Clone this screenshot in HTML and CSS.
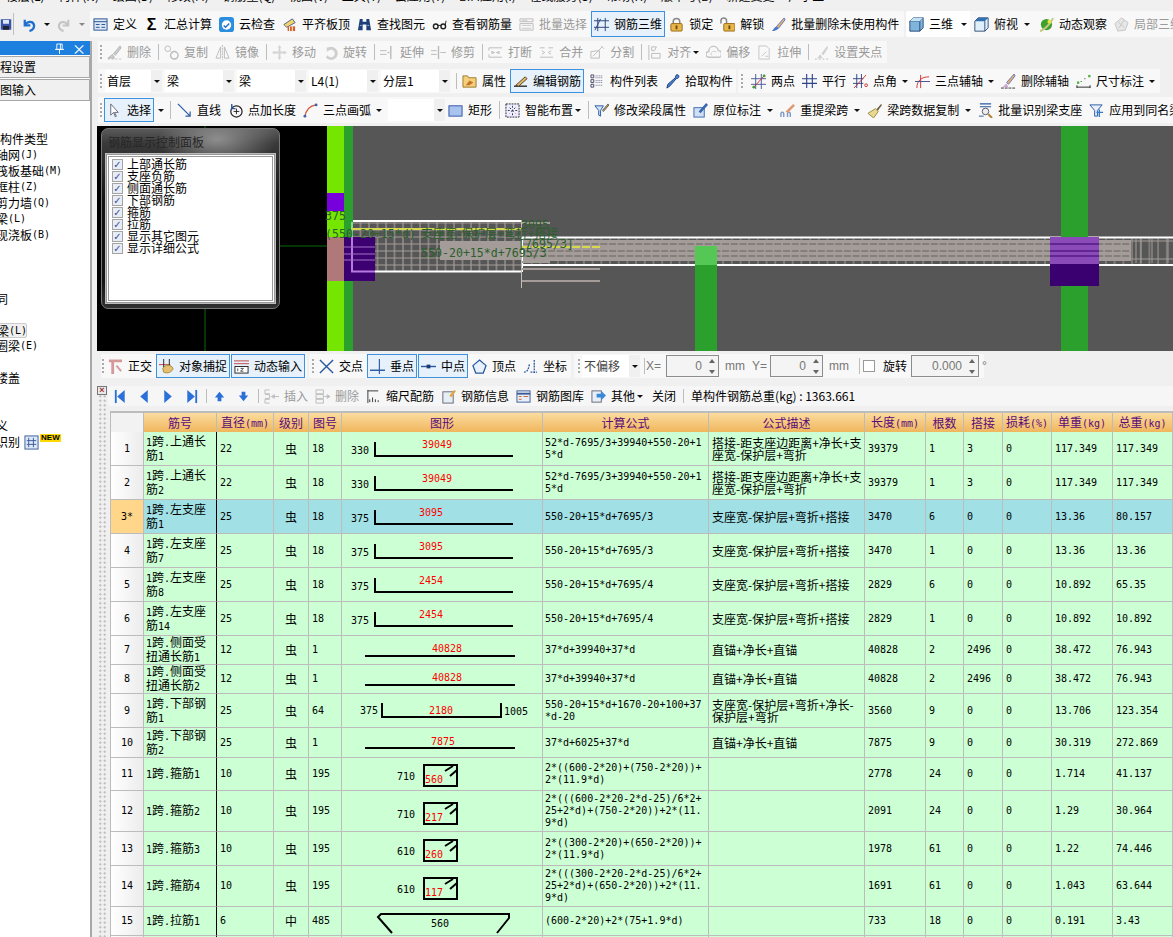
FILE: index.html
```html
<!DOCTYPE html>
<html lang="zh">
<head>
<meta charset="utf-8">
<title>钢筋三维</title>
<link rel="stylesheet" href="styles.css">
</head>
<body>
<svg class="defs" xmlns="http://www.w3.org/2000/svg">
<symbol id="save" viewBox="0 0 16 16"><rect x="1" y="1" width="14" height="14" fill="#3a55a8"/><rect x="4" y="2" width="8" height="5" fill="#dfe8f8"/><rect x="4" y="10" width="8" height="5" fill="#223"/></symbol>
<symbol id="undo" viewBox="0 0 16 16"><path d="M4 3v6h6M4 9c3-5 9-5 10 0 0 3-2 5-5 6" fill="none" stroke="#1f6fd0" stroke-width="2.4"/></symbol>
<symbol id="redo" viewBox="0 0 16 16"><path d="M12 3v6H6M12 9C9 4 3 4 2 9c0 3 2 5 5 6" fill="none" stroke="#c4c4c4" stroke-width="2.2"/></symbol>
<symbol id="def" viewBox="0 0 16 16"><rect x="1" y="2" width="14" height="12" fill="#dbe7f6" stroke="#24508f"/><path d="M1 5h14M3 8h4M3 11h4M9 8h4M9 11h4" stroke="#24508f"/></symbol>
<symbol id="cloud" viewBox="0 0 16 16"><rect x="0" y="0" width="16" height="16" rx="3" fill="#2b8fe0"/><circle cx="8" cy="8.500" r="5" fill="#fff"/><path d="M5 9l2 2 4-4" fill="none" stroke="#2b6fc0" stroke-width="1.600"/></symbol>
<symbol id="flat" viewBox="0 0 16 16"><path d="M2 8l9-6 3 4-9 5z" fill="#f4d36a" stroke="#46608a"/><rect x="6" y="10" width="8" height="5" fill="#d8622a"/><path d="M8 10v5M11 10v5" stroke="#fff"/></symbol>
<symbol id="bino" viewBox="0 0 16 16"><path d="M3 2h3v3h4V2h3l2 12h-5V8H6v6H1z" fill="#1f3f78"/><path d="M3 9h2M11 9h2" stroke="#8fb4ea"/></symbol>
<symbol id="glass" viewBox="0 0 16 16"><circle cx="4" cy="10" r="2.500" fill="none" stroke="#222" stroke-width="1.500"/><circle cx="12" cy="10" r="2.500" fill="none" stroke="#222" stroke-width="1.500"/><path d="M6 9h4M14 9l1-5" stroke="#222"/></symbol>
<symbol id="bsel" viewBox="0 0 16 16"><path d="M1 2h14v3H1zM1 7h14v7H1z" fill="none" stroke="#bbb"/><path d="M3 9h10M3 12h10M3 3.500h6" stroke="#c8c8c8"/></symbol>
<symbol id="r3d" viewBox="0 0 16 16"><path d="M0 4h16M0 11h16M4 1v14M12 1v14M1 14L7 2" fill="none" stroke="#27407a"/></symbol>
<symbol id="lock" viewBox="0 0 16 16"><path d="M4.500 8V5a3.500 3.500 0 017 0v3" fill="none" stroke="#888" stroke-width="1.600"/><rect x="2" y="7" width="12" height="8" rx="1" fill="#e8b548" stroke="#9a6a18"/><rect x="7" y="9" width="2" height="4" fill="#6a4810"/></symbol>
<symbol id="unlock" viewBox="0 0 16 16"><path d="M1 7V4a3 3 0 016 0v3" fill="none" stroke="#888" stroke-width="1.600"/><rect x="4" y="7" width="12" height="8" rx="1" fill="#e8b548" stroke="#9a6a18"/><rect x="9" y="9" width="2" height="4" fill="#6a4810"/></symbol>
<symbol id="brush" viewBox="0 0 16 16"><path d="M14 1L6 10l2 2 7-9z" fill="#e8b060" stroke="#5a78c0"/><path d="M6 10c-3 1-3 3-5 5 3 0 6-1 7-3z" fill="#4a78c8"/></symbol>
<symbol id="cube" viewBox="0 0 18 18"><path d="M1 5l4-4h12v12l-4 4H1z" fill="#7fb4dc" stroke="#1c3a66"/><path d="M1 5h12v12M13 5l4-4" fill="none" stroke="#1c3a66"/><path d="M1 5l4-4h12l-4 4z" fill="#c4e2f6"/></symbol>
<symbol id="top" viewBox="0 0 18 18"><path d="M1 5l4-4h12v12l-4 4H1z" fill="#dff0fb" stroke="#1c3a66"/><path d="M1 5l4-4h12l-4 4z" fill="#3570b0"/><path d="M13 5v12" stroke="#1c3a66"/></symbol>
<symbol id="orbit" viewBox="0 0 16 16"><circle cx="8" cy="8" r="6" fill="#3fa030"/><path d="M1 15C5 14 13 7 15 1" fill="none" stroke="#c4c880" stroke-width="2"/><circle cx="11" cy="5" r="2" fill="#e8e440"/></symbol>
<symbol id="loc3d" viewBox="0 0 16 16"><path d="M8 1l7 5-3 8-8 1-3-8z" fill="#e6e6e6" stroke="#c4c4c4"/><path d="M4 5l7 6M11 3l-6 9" stroke="#c8c8c8"/></symbol>
<symbol id="del" viewBox="0 0 16 16"><path d="M14 1L7 9l2 2 6-8zM6 10c-2 1-3 3-5 4h7z" fill="#ccc" stroke="#b4b4b4"/><path d="M1 15h14" stroke="#bbb" stroke-dasharray="2 2"/></symbol>
<symbol id="copy" viewBox="0 0 16 16"><circle cx="4" cy="4" r="3" fill="none" stroke="#bbb"/><circle cx="11" cy="11" r="4" fill="none" stroke="#bbb" stroke-width="1.500"/><path d="M7 7l2 2" stroke="#bbb"/></symbol>
<symbol id="mirror" viewBox="0 0 16 16"><path d="M6 2L1 14h5zM10 2l5 12h-5z" fill="none" stroke="#bbb"/><path d="M8 0v16" stroke="#bbb" stroke-dasharray="2 1"/></symbol>
<symbol id="move" viewBox="0 0 16 16"><path d="M8 0l2 3H9v4h4V6l3 2-3 2V9H9v4h1l-2 3-2-3h1V9H3v1L0 8l3-2v1h4V3H6z" fill="#d4d4d4"/></symbol>
<symbol id="rot" viewBox="0 0 16 16"><path d="M4 2v5l2-1a4 4 0 11-1 5l-2 2A7 7 0 105 3z" fill="#cfcfcf"/></symbol>
<symbol id="ext" viewBox="0 0 16 16"><path d="M0 6h7M0 10h7" stroke="#bbb"/><path d="M8 8h2M11.500 1v14" stroke="#bbb" stroke-width="1.500"/></symbol>
<symbol id="trim" viewBox="0 0 16 16"><path d="M0 6h6M0 10h6M10 8h6" stroke="#bbb"/><path d="M8 1v14" stroke="#bbb" stroke-width="1.500"/></symbol>
<symbol id="brk" viewBox="0 0 16 16"><path d="M1 6V3h14M1 10v3h14M4 7l3 1-3 1zM12 7l-3 1 3 1z" fill="none" stroke="#bbb"/></symbol>
<symbol id="merge" viewBox="0 0 16 16"><path d="M1 3h5M10 3h5M1 13h14M3 6l3 2-3 2M13 6l-3 2 3 2" fill="none" stroke="#bbb"/></symbol>
<symbol id="split" viewBox="0 0 16 16"><path d="M1 14V7l9-1v8zM3 12l10-10M12 1l3 3" fill="none" stroke="#bbb"/></symbol>
<symbol id="align" viewBox="0 0 16 16"><path d="M2 0v16M5 2h5l-2 4H5zM5 9h9v5H5z" fill="none" stroke="#bbb"/></symbol>
<symbol id="offs" viewBox="0 0 16 16"><path d="M3 13a3 3 0 010-6 5 5 0 0110-1 3.500 3.500 0 010 7z" fill="none" stroke="#c4c4c4" stroke-width="1.500"/><path d="M6 11a2 2 0 010-3 3 3 0 015 0" fill="none" stroke="#ccc"/></symbol>
<symbol id="stretch" viewBox="0 0 16 16"><path d="M2 1h8l3 3v11H2zM5 12l5-5M9 12h3" fill="none" stroke="#c4c4c4"/></symbol>
<symbol id="gripp" viewBox="0 0 16 16"><path d="M14 1L8 9l2 2 5-8zM7 10c-2 1-2 3-4 4h6z" fill="#d0d0d0"/><path d="M1 15h14" stroke="#bbb" stroke-dasharray="2 2"/></symbol>
<symbol id="attr" viewBox="0 0 16 16"><path d="M1 2h5l1 2h8v10H1z" fill="#f4d078" stroke="#9c7a30"/><path d="M4 12l4-5 4 2-4 3z" fill="#c87030"/></symbol>
<symbol id="edit" viewBox="0 0 16 16"><path d="M1 13h14" stroke="#222" stroke-width="1.400"/><path d="M3 12L13 3l2 2-9 8z" fill="#e0b868" stroke="#54402a"/></symbol>
<symbol id="list" viewBox="0 0 16 16"><path d="M1 1h3v3H1zM1 6h3v3H1zM1 11h3v3H1z" fill="none" stroke="#446"/><path d="M6 2h8M6 4h8M6 7h8M6 9h8M6 12h8" stroke="#668" stroke-dasharray="1 1"/></symbol>
<symbol id="pick" viewBox="0 0 16 16"><path d="M14 1c2 2 0 4-2 4l-7 8-3 2 1-4 8-7c0-2 1-4 3-3z" fill="#4a84d4" stroke="#1c3a78"/></symbol>
<symbol id="p2" viewBox="0 0 16 16"><path d="M0 5h16M0 11h16M5 0v16M11 0v16" stroke="#445a98"/><path d="M3 14L14 2" stroke="#d03030"/><circle cx="3" cy="14" r="1.500" fill="#4a9a30"/><circle cx="14" cy="2" r="1.500" fill="#4a9a30"/></symbol>
<symbol id="para" viewBox="0 0 16 16"><path d="M0 5h16M0 10h16M5 0v15M11 0v15" stroke="#2c4488" stroke-width="1.200"/></symbol>
<symbol id="ang" viewBox="0 0 16 16"><path d="M0 5h11M0 10h11M4 0v15M9 0v15" stroke="#2c4488"/><path d="M1 15L14 1" stroke="#d03030"/><circle cx="14" cy="12" r="1.500" fill="none" stroke="#d03030"/></symbol>
<symbol id="arc3" viewBox="0 0 16 16"><path d="M2 15C2 7 7 3 15 3M0 8h16M6 1v14" fill="none" stroke="#d03030"/><path d="M0 8h16" stroke="#445a98"/></symbol>
<symbol id="delax" viewBox="0 0 16 16"><path d="M14 0L6 9l2 2 7-9z" fill="#e8b060" stroke="#6878c0"/><path d="M6 10c-2 1-3 3-5 4h7z" fill="#d0a8d8"/><path d="M0 15h16" stroke="#333" stroke-dasharray="3 1"/></symbol>
<symbol id="dim" viewBox="0 0 16 16"><rect x="13" y="1" width="2.500" height="2.500" fill="#50b040"/><rect x="1" y="8" width="2.500" height="2.500" fill="#50b040"/><path d="M1 12v3M15 12v3M1 14h14M5 8h1M9 5h1" stroke="#222"/></symbol>
<symbol id="sel" viewBox="0 0 16 16"><path d="M4 1v12l3-3 2 5 1-1-2-4h4z" fill="#fff" stroke="#667"/></symbol>
<symbol id="line" viewBox="0 0 16 16"><path d="M1 1l13 13M14 9v5H9" fill="none" stroke="#2d5aa8" stroke-width="1.300"/></symbol>
<symbol id="ptlen" viewBox="0 0 16 16"><circle cx="9" cy="9" r="6" fill="none" stroke="#222" stroke-width="1.300"/><path d="M6 9h6M9 6v6" stroke="#222"/><path d="M4 1v5h4" fill="none" stroke="#2d5aa8" stroke-width="1.500"/></symbol>
<symbol id="arc" viewBox="0 0 16 16"><path d="M2 15C3 7 7 3 14 2" fill="none" stroke="#d85a3a" stroke-width="1.500"/><circle cx="2" cy="14" r="1.500" fill="#4060b0"/><circle cx="14" cy="2" r="1.500" fill="#4060b0"/></symbol>
<symbol id="rect" viewBox="0 0 16 16"><rect x="1" y="3" width="14" height="11" fill="#a8c4ee" stroke="#3050a8"/></symbol>
<symbol id="smart" viewBox="0 0 16 16"><rect x="1" y="1" width="14" height="14" fill="#eef" stroke="#223" stroke-dasharray="2 1"/><path d="M8 3v10M3 8h10M5 5l6 6M11 5l-6 6" stroke="#334" stroke-dasharray="2 2"/></symbol>
<symbol id="mod" viewBox="0 0 16 16"><path d="M1 3h9l-3 5v6l-2-1V8z" fill="#cfe4f8" stroke="#2858a0"/><path d="M15 1L9 8l1 1 6-7z" fill="#e8b060" stroke="#555"/></symbol>
<symbol id="orig" viewBox="0 0 16 16"><rect x="1" y="5" width="11" height="10" fill="#cfe0f4" stroke="#3a68b0"/><path d="M14 0L6 9l2 2 8-9z" fill="#3a68b0"/></symbol>
<symbol id="lift" viewBox="0 0 16 16"><path d="M1 15v-3c0-3 3-3 3 0v3M8 15v-3c0-3 3-3 3 0v3" fill="none" stroke="#7a98c8" stroke-width="1.500"/><path d="M6 9l8-8 2 2-8 8z" fill="#e09a70"/></symbol>
<symbol id="brushc" viewBox="0 0 16 16"><path d="M10 7l5-6 1 1-5 7z" fill="#6a6040"/><path d="M1 11l8-5 3 3-5 7z" fill="#e8d890" stroke="#9a8a48"/></symbol>
<symbol id="ident" viewBox="0 0 16 16"><path d="M2 1h12M2 4h12" stroke="#2858a0" stroke-width="1.300"/><circle cx="8" cy="9" r="3.500" fill="#eee" stroke="#556"/><path d="M11 12l4 4" stroke="#b08030" stroke-width="2"/><path d="M1 14h5" stroke="#2858a0"/></symbol>
<symbol id="apply" viewBox="0 0 16 16"><path d="M1 2h13l-5 6v6H6V8z" fill="#e8f0fa" stroke="#2858a0"/><path d="M8 10h7M11 7v8" stroke="#3a78c8" stroke-width="1.500"/></symbol>
<symbol id="ortho" viewBox="0 0 16 16"><path d="M1 2h14M5 2v14" stroke="#d49a9a" stroke-width="3"/><path d="M9 7l5 6" stroke="#d49a9a" stroke-width="2"/></symbol>
<symbol id="snap" viewBox="0 0 16 16"><path d="M0 6h12" stroke="#c04040"/><path d="M5 0v9" stroke="#222"/><path d="M11 0v9" stroke="#222"/><path d="M4 10c3-5 9-4 11 0-1 4-6 6-10 4z" fill="#e4c070" stroke="#a88838"/></symbol>
<symbol id="dyn" viewBox="0 0 16 16"><path d="M0 2h16M0 5h16" stroke="#c04040"/><rect x="1" y="8" width="14" height="7" fill="#fff" stroke="#222"/><path d="M4 10v3M7 10h3l-3 3h3" fill="none" stroke="#222" stroke-width=".8"/></symbol>
<symbol id="cross" viewBox="0 0 16 16"><path d="M1 1l14 14M15 1L1 15" stroke="#2858a0" stroke-width="1.500"/></symbol>
<symbol id="perp" viewBox="0 0 16 16"><path d="M0 12h16" stroke="#2858a0" stroke-width="1.500"/><path d="M10 0v16" stroke="#2858a0" stroke-width="1.200"/></symbol>
<symbol id="midp" viewBox="0 0 16 16"><path d="M0 8h16" stroke="#2858a0" stroke-width="1.500"/><rect x="6" y="6" width="4" height="4" fill="#1c3a78"/></symbol>
<symbol id="vert" viewBox="0 0 16 16"><path d="M8 1l7 6-3 8H4L1 7z" fill="#e8f2fc" stroke="#2858a0" stroke-width="1.300"/></symbol>
<symbol id="coord" viewBox="0 0 16 16"><path d="M1 14c4 0 5-4 6-9M8 14h7M12 1v14" fill="none" stroke="#2858a0" stroke-dasharray="2 1" stroke-width="1.400"/></symbol>
<symbol id="ins" viewBox="0 0 16 16"><path d="M6 1H1v4h5M6 11H1v4h5M1 6h5v4H1M8 8h8M8 8l3-2v4z" fill="none" stroke="#bbb"/></symbol>
<symbol id="rem" viewBox="0 0 16 16"><path d="M1 1h8v4H1zM1 6h8v4H1zM1 11h8v4H1zM10 8h6M16 8l-3-2v4z" fill="none" stroke="#bbb"/></symbol>
<symbol id="scale" viewBox="0 0 16 16"><path d="M2 1v14M4 14v-3M7 14v-5M10 14v-3M13 14v-2M2 2h11" stroke="#333" fill="none"/></symbol>
<symbol id="info" viewBox="0 0 16 16"><rect x="2" y="3" width="11" height="12" fill="#e8eef6" stroke="#667"/><path d="M9 7l5-6 2 1-5 7z" fill="#e0a840"/></symbol>
<symbol id="libr" viewBox="0 0 16 16"><rect x="1" y="2" width="14" height="12" fill="#e8eff8" stroke="#3a5a98"/><path d="M1 5h14" stroke="#3a5a98" stroke-width="2"/><path d="M3 8h3M8 8h5M3 11h3" stroke="#c86838"/></symbol>
<symbol id="other" viewBox="0 0 16 16"><rect x="1" y="2" width="10" height="12" fill="#e8eef6" stroke="#667"/><path d="M6 5h5V2l5 5-5 5V9H6z" fill="#3a88d8"/></symbol>
<symbol id="first" viewBox="0 0 12 16"><path d="M1.500 1v14" stroke="#2a70d8" stroke-width="2"/><path d="M11 1v14L3 8z" fill="#2a70d8"/></symbol>
<symbol id="prev" viewBox="0 0 12 16"><path d="M10 1v14L2 8z" fill="#2a70d8"/></symbol>
<symbol id="next" viewBox="0 0 12 16"><path d="M2 1v14l8-7z" fill="#2a70d8"/></symbol>
<symbol id="last" viewBox="0 0 12 16"><path d="M10.500 1v14" stroke="#2a70d8" stroke-width="2"/><path d="M1 1v14l8-7z" fill="#2a70d8"/></symbol>
<symbol id="up" viewBox="0 0 16 16"><path d="M8 3l5 6h-3v4H6V9H3z" fill="#2a70d8"/></symbol>
<symbol id="down" viewBox="0 0 16 16"><path d="M8 13l5-6h-3V3H6v4H3z" fill="#2a70d8"/></symbol>
</svg>

<div class="app">
  <div class="menu"><div class="menu-in">楼层(L) 构件(N) 绘图(D) 修改(M) 钢筋量(Q) 视图(V) 工具(T) 云应用(Y) BIM应用(I) 在线服务(S) 帮助(H) 版本号(B) 新建变更 广小二</div></div>

  <div class="row1">
    <span class="lead">
      <svg class="ic savei"><use href="#save"/></svg><span class="sep sepl"></span>
      <svg class="ic undo"><use href="#undo"/></svg><span class="arr a1"></span>
      <svg class="ic redo"><use href="#redo"/></svg><span class="arr a1 offa"></span>
    </span>
    <div class="band b1">
      <span class="it"><svg class="ic"><use href="#def"/></svg>定义</span>
      <span class="it"><span class="ic sig">Σ</span>汇总计算</span>
      <span class="it"><svg class="ic"><use href="#cloud"/></svg>云检查</span>
      <span class="it"><svg class="ic"><use href="#flat"/></svg>平齐板顶</span>
      <span class="it"><svg class="ic"><use href="#bino"/></svg>查找图元</span>
      <span class="it"><svg class="ic"><use href="#glass"/></svg>查看钢筋量</span>
      <span class="it off"><svg class="ic"><use href="#bsel"/></svg>批量选择</span>
      <span class="it on"><svg class="ic"><use href="#r3d"/></svg>钢筋三维</span>
      <span class="it"><svg class="ic"><use href="#lock"/></svg>锁定</span>
      <span class="it"><svg class="ic"><use href="#unlock"/></svg>解锁</span>
      <span class="it"><svg class="ic"><use href="#brush"/></svg>批量删除未使用构件</span>
    </div>
    <div class="band b2">
      <span class="it white"><svg class="ic"><use href="#cube"/></svg>三维<span class="arr big"></span></span>
      <span class="it"><svg class="ic"><use href="#top"/></svg>俯视<span class="arr big2"></span></span>
      <span class="it"><svg class="ic"><use href="#orbit"/></svg>动态观察</span>
      <span class="it off"><svg class="ic"><use href="#loc3d"/></svg>局部三维</span>
    </div>
  </div>

  <div class="work">
    <aside class="side">
      <div class="side-head"><svg class="pin" viewBox="0 0 10 12"><path d="M2 1h6v6H2zM0 7h10M5 7v5M6 1v6" fill="none" stroke="#fff"/></svg><span class="side-x">×</span></div>
      <div class="side-btn">程设置</div>
      <div class="side-btn">图输入</div>
      <ul class="tree">
        <li class="first-li">构件类型</li>
        <li>轴网<i>(J)</i></li>
        <li>筏板基础<i>(M)</i></li>
        <li>框柱<i>(Z)</i></li>
        <li>剪力墙<i>(Q)</i></li>
        <li>梁<i>(L)</i></li>
        <li>现浇板<i>(B)</i></li>
        <li></li><li></li><li></li>
        <li>同</li>
        <li></li>
        <li class="cur">梁<i>(L)</i></li>
        <li>圈梁<i>(E)</i></li>
        <li></li>
        <li>楼盖</li>
        <li></li><li></li>
        <li>义</li>
        <li>识别<svg class="tree-ic" viewBox="0 0 16 16"><rect x="1" y="1" width="14" height="14" fill="#dce8f8" stroke="#3a5a98"/><path d="M5 3v10M10 3v10M3 6h10M3 10h10" stroke="#3a5a98"/></svg><b class="new">NEW</b></li>
      </ul>
    </aside>

    <main class="main">
      <div class="band r2">
        <span class="grip"></span>
        <span class="it off"><svg class="ic"><use href="#del"/></svg>删除</span><span class="sep"></span>
        <span class="it off"><svg class="ic"><use href="#copy"/></svg>复制</span>
        <span class="it off"><svg class="ic"><use href="#mirror"/></svg>镜像</span><span class="sep"></span>
        <span class="it off"><svg class="ic"><use href="#move"/></svg>移动</span>
        <span class="it off"><svg class="ic"><use href="#rot"/></svg>旋转</span><span class="sep"></span>
        <span class="it off"><svg class="ic"><use href="#ext"/></svg>延伸</span>
        <span class="it off"><svg class="ic"><use href="#trim"/></svg>修剪</span><span class="sep"></span>
        <span class="it off"><svg class="ic"><use href="#brk"/></svg>打断</span>
        <span class="it off"><svg class="ic"><use href="#merge"/></svg>合并</span>
        <span class="it off"><svg class="ic"><use href="#split"/></svg>分割</span><span class="sep"></span>
        <span class="it off"><svg class="ic"><use href="#align"/></svg>对齐<span class="arr c"></span></span>
        <span class="it off"><svg class="ic"><use href="#offs"/></svg>偏移</span>
        <span class="it off"><svg class="ic"><use href="#stretch"/></svg>拉伸</span><span class="sep"></span>
        <span class="it off"><svg class="ic"><use href="#gripp"/></svg>设置夹点</span>
      </div>

      <div class="barline r3">
        <div class="band r3a">
          <span class="grip"></span>
          <span class="combo c57"><span class="ct">首层</span><span class="cb"><span class="arr"></span></span></span>
          <span class="combo"><span class="ct">梁</span><span class="cb"><span class="arr"></span></span></span>
          <span class="combo"><span class="ct">梁</span><span class="cb"><span class="arr"></span></span></span>
          <span class="combo"><span class="ct">L4(1)</span><span class="cb"><span class="arr"></span></span></span>
          <span class="combo"><span class="ct">分层1</span><span class="cb"><span class="arr"></span></span></span>
          <span class="sep sep3"></span>
          <span class="it"><svg class="ic"><use href="#attr"/></svg>属性</span>
          <span class="it on"><svg class="ic"><use href="#edit"/></svg>编辑钢筋</span>
          <span class="it nudge"><svg class="ic"><use href="#list"/></svg>构件列表</span>
          <span class="it"><svg class="ic"><use href="#pick"/></svg>拾取构件</span>
        </div>
        <div class="band r3b">
          <span class="grip"></span>
          <span class="it"><svg class="ic"><use href="#p2"/></svg>两点</span>
          <span class="it"><svg class="ic"><use href="#para"/></svg>平行</span>
          <span class="it"><svg class="ic"><use href="#ang"/></svg>点角<span class="arr"></span></span>
          <span class="it"><svg class="ic"><use href="#arc3"/></svg>三点辅轴<span class="arr"></span></span>
          <span class="it"><svg class="ic"><use href="#delax"/></svg>删除辅轴</span>
          <span class="it"><svg class="ic"><use href="#dim"/></svg>尺寸标注<span class="arr"></span></span>
        </div>
      </div>

      <div class="band r4">
        <span class="grip"></span>
        <span class="it on"><svg class="ic"><use href="#sel"/></svg>选择</span><span class="arr a3"></span>
        <span class="sep"></span>
        <span class="it nudge1"><svg class="ic"><use href="#line"/></svg>直线</span>
        <span class="it"><svg class="ic"><use href="#ptlen"/></svg>点加长度</span>
        <span class="it"><svg class="ic"><use href="#arc"/></svg>三点画弧<span class="arr"></span></span>
        <span class="combo c57 cm"><span class="ct"></span><span class="cb"><span class="arr"></span></span></span>
        <span class="it"><svg class="ic"><use href="#rect"/></svg>矩形</span><span class="sep"></span>
        <span class="it"><svg class="ic"><use href="#smart"/></svg>智能布置<span class="arr c"></span></span><span class="sep"></span>
        <span class="it"><svg class="ic"><use href="#mod"/></svg>修改梁段属性</span>
        <span class="it"><svg class="ic"><use href="#orig"/></svg>原位标注<span class="arr w"></span></span>
        <span class="it"><svg class="ic"><use href="#lift"/></svg>重提梁跨<span class="arr w"></span></span>
        <span class="it"><svg class="ic"><use href="#brushc"/></svg>梁跨数据复制<span class="arr w"></span></span>
        <span class="it"><svg class="ic"><use href="#ident"/></svg>批量识别梁支座</span>
        <span class="it"><svg class="ic"><use href="#apply"/></svg>应用到同名梁</span>
      </div>

      <div class="canvas">
        <svg class="scene" viewBox="97 126 1076 225" xmlns="http://www.w3.org/2000/svg">
          <defs>
            <pattern id="gridp" x="351" y="222" width="8.500" height="7" patternUnits="userSpaceOnUse"><path d="M0 1h8.500M1 0v7" stroke="#a39c98" stroke-width="1.200"/></pattern>
            <pattern id="tick" x="522" y="238" width="8.700" height="26" patternUnits="userSpaceOnUse"><path d="M1 0v26" stroke="#a39c98"/></pattern>
          </defs>
          <rect x="97" y="126" width="230" height="225" fill="#000"/>
          <rect x="353" y="126" width="820" height="225" fill="#565656"/>
          <path d="M205 126v225M280 246h47" stroke="#0a6a0a"/>
          <rect x="327" y="126" width="17" height="225" fill="#74e600"/>
          <rect x="344" y="126" width="9" height="225" fill="#2ca02c"/>
          <rect x="327" y="193" width="17" height="18" fill="#7700dd"/>
          <rect x="327" y="237" width="17" height="44" fill="#b07878"/>
          <rect x="351" y="222" width="171" height="49" fill="url(#gridp)"/>
          <rect x="440" y="241" width="82" height="19" fill="#a39c98"/>
          <rect x="344" y="237" width="31" height="44" fill="#3c0070"/>
          <path d="M353 221h169M375 271.500h147" stroke="#fff" stroke-width="2"/>
          <path d="M352 222v49.500h23" fill="none" stroke="#b87ae0" stroke-width="2"/>
          <path d="M352 222v15" stroke="#7fe07f" stroke-width="2"/>
          <path d="M351 229h171" stroke="#d8d850" stroke-width="2"/>
          <path d="M344 247h31M344 254h31M344 260h31" stroke="#a070c8"/>
          <rect x="522" y="240" width="609" height="21" fill="#a39c98"/>
          <rect x="522" y="238" width="651" height="26" fill="url(#tick)"/>
          <path d="M522 244h609M522 251h609M522 256h609" stroke="#66625f" stroke-dasharray="7 1.700"/>
          <path d="M1131 241h42M1131 259h42M1136 239v24M1141 239v24M1152 239v24M1168 239v24" stroke="#a39c98"/>
          <path d="M522 237.500h651M522 265h651" stroke="#fff" stroke-width="2"/>
          <path d="M522 237v35" stroke="#fff" stroke-width="2"/>
          <path d="M521.500 220v68" stroke="#c0bcb8"/>
          <path d="M522 223h28M522 262h28M522 269h78M522 281h78" stroke="#a39c98" stroke-width="2"/>
          <path d="M522 247h78" stroke="#d8d850" stroke-width="2" stroke-dasharray="8 2"/>
          <rect x="695" y="246" width="22" height="105" fill="#2ca02c"/>
          <rect x="695" y="246" width="22" height="19" fill="#55c755"/>
          <rect x="1061" y="126" width="27" height="225" fill="#2ca02c"/>
          <rect x="1050" y="237" width="49" height="49" fill="#3a0070"/>
          <rect x="1050" y="237" width="49" height="27" fill="#8a4ab8"/>
          <path d="M1050 244h49M1050 251h49M1050 256h49" stroke="#3a0070"/>
          <g class="cad">
            <text x="325" y="220">375</text>
            <text x="325" y="238">(550-20+15*d)</text>
            <text x="421" y="238" class="cad-zh">支座宽-保护层+弯折+搭接</text>
            <text x="521" y="229">3095</text>
            <text x="518" y="248">[7695/3]</text>
            <text x="421" y="257">550-20+15*d+7695/3</text>
          </g>
        </svg>
        <div class="ctrl">
          <div class="ctrl-title">钢筋显示控制面板</div>
          <div class="ctrl-box">
            <label class="ck"><span class="chk">✓</span>上部通长筋</label>
            <label class="ck"><span class="chk">✓</span>支座负筋</label>
            <label class="ck"><span class="chk">✓</span>侧面通长筋</label>
            <label class="ck"><span class="chk">✓</span>下部钢筋</label>
            <label class="ck"><span class="chk">✓</span>箍筋</label>
            <label class="ck"><span class="chk">✓</span>拉筋</label>
            <label class="ck"><span class="chk">✓</span>显示其它图元</label>
            <label class="ck"><span class="chk">✓</span>显示详细公式</label>
          </div>
        </div>
      </div>

      <div class="barline r5">
        <div class="band r5a">
          <span class="grip"></span>
          <span class="it"><svg class="ic"><use href="#ortho"/></svg>正交</span>
          <span class="it on"><svg class="ic"><use href="#snap"/></svg>对象捕捉</span>
          <span class="it on"><svg class="ic"><use href="#dyn"/></svg>动态输入</span>
        </div>
        <div class="band r5b">
          <span class="grip"></span>
          <span class="it"><svg class="ic"><use href="#cross"/></svg>交点</span>
          <span class="it on"><svg class="ic"><use href="#perp"/></svg>垂点</span>
          <span class="it on"><svg class="ic"><use href="#midp"/></svg>中点</span>
          <span class="it"><svg class="ic"><use href="#vert"/></svg>顶点</span>
          <span class="it"><svg class="ic"><use href="#coord"/></svg>坐标</span>
        </div>
        <div class="band r5c">
          <span class="grip"></span>
          <span class="combo c58"><span class="ct">不偏移</span><span class="cb"><span class="arr"></span></span></span>
          <span class="sep s1"></span>
          <span class="lbl">X=</span>
          <span class="num"><span class="val">0</span><span class="spin"><span class="su"></span><span class="sd"></span></span></span>
          <span class="lbl mm">mm</span>
          <span class="lbl yy">Y=</span>
          <span class="num"><span class="val">0</span><span class="spin"><span class="su"></span><span class="sd"></span></span></span>
          <span class="lbl mm">mm</span>
          <span class="sep s2"></span>
          <span class="box"></span>
          <span class="rot">旋转</span>
          <span class="num n68"><span class="val">0.000</span><span class="spin"><span class="su"></span><span class="sd"></span></span></span>
          <span class="lbl deg">°</span>
        </div>
      </div>

      <div class="lower">
        <div class="dock"><span class="dock-x">×</span></div>
        <div class="lower-main">
          <div class="band r6">
            <span class="nav"><svg class="ic nv"><use href="#first"/></svg></span>
            <span class="nav"><svg class="ic nv"><use href="#prev"/></svg></span>
            <span class="nav"><svg class="ic nv"><use href="#next"/></svg></span>
            <span class="nav"><svg class="ic nv"><use href="#last"/></svg></span>
            <span class="sep sep2"></span>
            <span class="nav"><svg class="ic"><use href="#up"/></svg></span>
            <span class="nav"><svg class="ic"><use href="#down"/></svg></span>
            <span class="sep"></span>
            <span class="it off"><svg class="ic"><use href="#ins"/></svg>插入</span>
            <span class="it off"><svg class="ic"><use href="#rem"/></svg>删除</span>
            <span class="it"><svg class="ic"><use href="#scale"/></svg>缩尺配筋</span>
            <span class="it"><svg class="ic"><use href="#info"/></svg>钢筋信息</span>
            <span class="it"><svg class="ic"><use href="#libr"/></svg>钢筋图库</span>
            <span class="it"><svg class="ic"><use href="#other"/></svg>其他<span class="arr c"></span></span>
            <span class="it close">关闭</span>
            <span class="sep"></span>
            <span class="total">单构件钢筋总重(kg) : 1363.661</span>
          </div>

          <table class="grid">
            <colgroup><col class="w34"><col class="w73"><col class="w57"><col class="w35"><col class="w33"><col class="w201"><col class="w166"><col class="w156"><col class="w61"><col class="w38"><col class="w39"><col class="w49"><col class="w61"><col class="w60"></colgroup>
            <thead>
              <tr><th class="corner"></th><th>筋号</th><th>直径<i>(mm)</i></th><th>级别</th><th>图号</th><th>图形</th><th>计算公式</th><th>公式描述</th><th>长度<i>(mm)</i></th><th>根数</th><th>搭接</th><th>损耗<i>(%)</i></th><th>单重<i>(kg)</i></th><th>总重<i>(kg)</i></th></tr>
            </thead>
            <tbody>
              <tr class="h34"><td class="rh">1</td><td class="nm"><i>1</i>跨<i>.</i>上通长<br>筋<i>1</i></td><td class="n">22</td><td class="gr">虫</td><td class="n">18</td><td class="sh"><svg class="shape"><text x="10" y="22">330</text><path d="M34 10v14h138"/><text class="rd" x="96" y="16">39049</text></svg></td><td class="n f">52*d-7695/3+39940+550-20+1<br>5*d</td><td class="d">搭接-距支座边距离+净长+支<br>座宽-保护层+弯折</td><td class="n">39379</td><td class="n">1</td><td class="n">3</td><td class="n">0</td><td class="n">117.349</td><td class="n">117.349</td></tr>
              <tr class="h34"><td class="rh">2</td><td class="nm"><i>1</i>跨<i>.</i>上通长<br>筋<i>2</i></td><td class="n">22</td><td class="gr">虫</td><td class="n">18</td><td class="sh"><svg class="shape"><text x="10" y="22">330</text><path d="M34 10v14h138"/><text class="rd" x="96" y="16">39049</text></svg></td><td class="n f">52*d-7695/3+39940+550-20+1<br>5*d</td><td class="d">搭接-距支座边距离+净长+支<br>座宽-保护层+弯折</td><td class="n">39379</td><td class="n">1</td><td class="n">3</td><td class="n">0</td><td class="n">117.349</td><td class="n">117.349</td></tr>
              <tr class="h34 cur-row"><td class="rh rs">3*</td><td class="nm"><i>1</i>跨<i>.</i>左支座<br>筋<i>1</i></td><td class="n">25</td><td class="gr">虫</td><td class="n">18</td><td class="sh"><svg class="shape"><text x="10" y="22">375</text><path d="M34 10v14h138"/><text class="rd" x="90" y="16">3095</text></svg></td><td class="n f">550-20+15*d+7695/3</td><td class="d">支座宽-保护层+弯折+搭接</td><td class="n">3470</td><td class="n">6</td><td class="n">0</td><td class="n">0</td><td class="n">13.36</td><td class="n">80.157</td></tr>
              <tr class="h34"><td class="rh">4</td><td class="nm"><i>1</i>跨<i>.</i>左支座<br>筋<i>7</i></td><td class="n">25</td><td class="gr">虫</td><td class="n">18</td><td class="sh"><svg class="shape"><text x="10" y="22">375</text><path d="M34 10v14h138"/><text class="rd" x="90" y="16">3095</text></svg></td><td class="n f">550-20+15*d+7695/3</td><td class="d">支座宽-保护层+弯折+搭接</td><td class="n">3470</td><td class="n">1</td><td class="n">0</td><td class="n">0</td><td class="n">13.36</td><td class="n">13.36</td></tr>
              <tr class="h34"><td class="rh">5</td><td class="nm"><i>1</i>跨<i>.</i>左支座<br>筋<i>8</i></td><td class="n">25</td><td class="gr">虫</td><td class="n">18</td><td class="sh"><svg class="shape"><text x="10" y="22">375</text><path d="M34 10v14h138"/><text class="rd" x="90" y="16">2454</text></svg></td><td class="n f">550-20+15*d+7695/4</td><td class="d">支座宽-保护层+弯折+搭接</td><td class="n">2829</td><td class="n">6</td><td class="n">0</td><td class="n">0</td><td class="n">10.892</td><td class="n">65.35</td></tr>
              <tr class="h34"><td class="rh">6</td><td class="nm"><i>1</i>跨<i>.</i>左支座<br>筋<i>14</i></td><td class="n">25</td><td class="gr">虫</td><td class="n">18</td><td class="sh"><svg class="shape"><text x="10" y="22">375</text><path d="M34 10v14h138"/><text class="rd" x="90" y="16">2454</text></svg></td><td class="n f">550-20+15*d+7695/4</td><td class="d">支座宽-保护层+弯折+搭接</td><td class="n">2829</td><td class="n">1</td><td class="n">0</td><td class="n">0</td><td class="n">10.892</td><td class="n">10.892</td></tr>
              <tr class="h29"><td class="rh">7</td><td class="nm"><i>1</i>跨<i>.</i>侧面受<br>扭通长筋<i>1</i></td><td class="n">12</td><td class="gr">虫</td><td class="n">1</td><td class="sh"><svg class="shape"><path d="M24 20h150"/><text class="rd" x="106" y="16">40828</text></svg></td><td class="n f">37*d+39940+37*d</td><td class="d">直锚+净长+直锚</td><td class="n">40828</td><td class="n">2</td><td class="n">2496</td><td class="n">0</td><td class="n">38.472</td><td class="n">76.943</td></tr>
              <tr class="h29"><td class="rh">8</td><td class="nm"><i>1</i>跨<i>.</i>侧面受<br>扭通长筋<i>2</i></td><td class="n">12</td><td class="gr">虫</td><td class="n">1</td><td class="sh"><svg class="shape"><path d="M24 20h150"/><text class="rd" x="106" y="16">40828</text></svg></td><td class="n f">37*d+39940+37*d</td><td class="d">直锚+净长+直锚</td><td class="n">40828</td><td class="n">2</td><td class="n">2496</td><td class="n">0</td><td class="n">38.472</td><td class="n">76.943</td></tr>
              <tr class="h34"><td class="rh">9</td><td class="nm"><i>1</i>跨<i>.</i>下部钢<br>筋<i>1</i></td><td class="n">25</td><td class="gr">虫</td><td class="n">64</td><td class="sh"><svg class="shape"><text x="19" y="20">375</text><path d="M41 9v14h119V9"/><text class="rd" x="100" y="20">2180</text><text x="163" y="21">1005</text></svg></td><td class="n f">550-20+15*d+1670-20+100+37<br>*d-20</td><td class="d">支座宽-保护层+弯折+净长-<br>保护层+弯折</td><td class="n">3560</td><td class="n">9</td><td class="n">0</td><td class="n">0</td><td class="n">13.706</td><td class="n">123.354</td></tr>
              <tr class="h30"><td class="rh">10</td><td class="nm"><i>1</i>跨<i>.</i>下部钢<br>筋<i>2</i></td><td class="n">25</td><td class="gr">虫</td><td class="n">1</td><td class="sh"><svg class="shape"><path d="M24 20h150"/><text class="rd" x="102" y="17">7875</text></svg></td><td class="n f">37*d+6025+37*d</td><td class="d">直锚+净长+直锚</td><td class="n">7875</td><td class="n">9</td><td class="n">0</td><td class="n">0</td><td class="n">30.319</td><td class="n">272.869</td></tr>
              <tr class="h33"><td class="rh">11</td><td class="nm"><i>1</i>跨<i>.</i>箍筋<i>1</i></td><td class="n">10</td><td class="gr">虫</td><td class="n">195</td><td class="sh"><svg class="shape"><text x="56" y="22">710</text><path d="M83 7h33v21H83zM104 13l8-5M109 18l7-6"/><text class="rd" x="93" y="25">560</text></svg></td><td class="n f">2*((600-2*20)+(750-2*20))+<br>2*(11.9*d)</td><td class="d"></td><td class="n">2778</td><td class="n">24</td><td class="n">0</td><td class="n">0</td><td class="n">1.714</td><td class="n">41.137</td></tr>
              <tr class="h41"><td class="rh">12</td><td class="nm"><i>1</i>跨<i>.</i>箍筋<i>2</i></td><td class="n">10</td><td class="gr">虫</td><td class="n">195</td><td class="sh"><svg class="shape"><text x="56" y="27">710</text><path d="M83 12h33v21H83zM104 18l8-5M109 23l7-6"/><text class="rd" x="93" y="30">217</text></svg></td><td class="n f">2*(((600-2*20-2*d-25)/6*2+<br>25+2*d)+(750-2*20))+2*(11.<br>9*d)</td><td class="d"></td><td class="n">2091</td><td class="n">24</td><td class="n">0</td><td class="n">0</td><td class="n">1.29</td><td class="n">30.964</td></tr>
              <tr class="h34"><td class="rh">13</td><td class="nm"><i>1</i>跨<i>.</i>箍筋<i>3</i></td><td class="n">10</td><td class="gr">虫</td><td class="n">195</td><td class="sh"><svg class="shape"><text x="56" y="23">610</text><path d="M83 8h33v21H83zM104 14l8-5M109 19l7-6"/><text class="rd" x="93" y="26">260</text></svg></td><td class="n f">2*((300-2*20)+(650-2*20))+<br>2*(11.9*d)</td><td class="d"></td><td class="n">1978</td><td class="n">61</td><td class="n">0</td><td class="n">0</td><td class="n">1.22</td><td class="n">74.446</td></tr>
              <tr class="h41"><td class="rh">14</td><td class="nm"><i>1</i>跨<i>.</i>箍筋<i>4</i></td><td class="n">10</td><td class="gr">虫</td><td class="n">195</td><td class="sh"><svg class="shape"><text x="56" y="27">610</text><path d="M83 12h33v21H83zM104 18l8-5M109 23l7-6"/><text class="rd" x="93" y="30">117</text></svg></td><td class="n f">2*(((300-2*20-2*d-25)/6*2+<br>25+2*d)+(650-2*20))+2*(11.<br>9*d)</td><td class="d"></td><td class="n">1691</td><td class="n">61</td><td class="n">0</td><td class="n">0</td><td class="n">1.043</td><td class="n">63.644</td></tr>
              <tr class="h29"><td class="rh">15</td><td class="nm"><i>1</i>跨<i>.</i>拉筋<i>1</i></td><td class="n">6</td><td class="gr">中</td><td class="n">485</td><td class="sh"><svg class="shape"><path d="M51 26L37 10l3-3h128v4l-12 15"/><text class="mid" x="99" y="20">560</text></svg></td><td class="n f">(600-2*20)+2*(75+1.9*d)</td><td class="d"></td><td class="n">733</td><td class="n">18</td><td class="n">0</td><td class="n">0</td><td class="n">0.191</td><td class="n">3.43</td></tr>
              <tr class="h29"><td class="rh"></td><td class="nm"></td><td class="n"></td><td class="gr"></td><td class="n"></td><td class="sh"></td><td class="n"></td><td class="d"></td><td class="n"></td><td class="n"></td><td class="n"></td><td class="n"></td><td class="n"></td><td class="n"></td></tr>
            </tbody>
          </table>
        </div>
      </div>
    </main>
  </div>
</div>
</body>
</html>
```
FILE: styles.css
```css
* { box-sizing: border-box; }
html, body { margin: 0; padding: 0; }
body {
  width: 1173px; height: 937px; overflow: hidden;
  background: #f0f0f0; color: #000;
  font: 12px/14px "Noto Sans CJK SC", "Liberation Sans", sans-serif;
}
.defs { position: absolute; width: 0; height: 0; }
.app { width: 1173px; height: 937px; overflow: hidden; display: flex; flex-direction: column; }
i { font-style: normal; font-family: "DejaVu Sans Mono", monospace; font-size: 10px; }

.menu { height: 8px; overflow: hidden; flex: none; }
.menu-in { margin-top: -11px; white-space: nowrap; word-spacing: 11px; line-height: 14px; padding-left: 6px; }

.band { display: flex; align-items: center; background: #f8f8f8; border-radius: 2px; white-space: nowrap; }
.it {
  display: inline-flex; align-items: center; gap: 5px; height: 100%;
  padding: 0 3px; margin-right: 1px; flex: none;
}
.it.off { color: #9a9a9a; }
.it.on { background: #e6f1fb; box-shadow: inset 0 0 0 1px #3c92e0; }
.ic { width: 15px; height: 15px; flex: none; display: block; }
.sig { font-size: 16px; font-weight: 700; text-align: center; line-height: 15px; font-family: "Liberation Sans", sans-serif; }
.sep { width: 1px; height: 70%; background: #bdbdbd; margin: 0 2px 0 3px; flex: none; }
.grip {
  width: 4px; height: 16px; margin: 0 1px 0 1px; flex: none;
  background-image: radial-gradient(circle, #aaa 1px, transparent 1.2px);
  background-size: 4px 4px;
}
.arr {
  width: 0; height: 0; flex: none; display: inline-block;
  border-left: 3px solid transparent; border-right: 3px solid transparent; border-top: 3px solid #111;
}
.arr.c { margin-left: -3px; }
.arr.w { margin-left: 1px; }
.arr.big { margin-left: 3px; }
.arr.big2 { margin-left: 1px; margin-right: 2px; }

/* row 1 */
.row1 { display: flex; height: 26px; margin-top: 3px; flex: none; }
.lead { width: 90px; display: flex; align-items: center; flex: none; }
.savei { width: 12px; height: 13px; }
.lead .sepl { height: 22px; margin: 0 7px 0 1px; }
.lead .undo { margin-right: 8px; }
.lead .a1 { margin-right: 7px; }
.lead .redo { margin-right: 7px; }
.offa { border-top-color: #888; }
.b1 { width: 814px; flex: none; }
.b2 { margin-left: 2px; flex: 1; overflow: hidden; }
.white { background: #fff; }

/* body */
.work { display: flex; margin-top: 4px; flex: 1; min-height: 0; }
.side { width: 92px; flex: none; background: #fff; border-right: 2px solid #a8a8a8; overflow: hidden; margin-bottom: 0; }
.side-head { height: 14px; background: #1e80de; color: #fff; display: flex; justify-content: flex-end; align-items: center; gap: 8px; padding-right: 4px; font-size: 10px; }
.pin { width: 9px; height: 11px; flex: none; }
.side-x { font-size: 14px; }
.side-btn { height: 22px; background: #f0f0f0; border: 1px solid #a8a8a8; border-left: 0; line-height: 20px; margin-top: 1px; white-space: nowrap; }
.side-btn:first-of-type { margin-top: 3px; }
.tree { list-style: none; margin: 30px 0 0; padding: 0; }
.tree li { height: 16px; line-height: 16px; white-space: nowrap; margin-left: -4px; display: flex; align-items: center; }
.tree .first-li { margin-left: 0; }
.tree .cur { background: #f0f0f0; border: 1px solid #ccc; border-radius: 2px; width: 31px; height: 15px; }
.tree-ic { width: 15px; height: 15px; margin-left: 4px; flex: none; }
.new { font: 700 8px/8px "Liberation Sans", sans-serif; color: #000; background: #ffd800; padding: 0 1px; margin: -8px 0 0 1px; }

.main { width: 1076px; margin-left: 5px; flex: none; display: flex; flex-direction: column; }
.r2 { height: 22px; width: 789px; margin-left: 1px; flex: none; }
.barline { display: flex; flex: none; }
.r3 { height: 24px; margin-top: 6px; margin-left: 1px; }
.r3a { width: 638px; flex: none; }
.r3b { width: 422px; margin-left: 2px; flex: none; }
.r3b .grip { margin: 0 4px 0 2px; }
.r4 { height: 26px; margin-top: 4px; margin-left: 1px; flex: none; }
.r4 .it.on { height: 24px; }

.combo { display: inline-flex; width: 69px; height: 22px; background: #fff; margin-right: 3px; flex: none; align-items: stretch; }
.c57 { width: 57px; margin-left: 1px; }
.cm { margin-left: 2px; margin-right: 0; }
.c58 { width: 58px; margin-left: 1px; }
.ct { flex: 1; line-height: 22px; padding-left: 2px; }
.cb { width: 11px; background: #f0f0f0; display: flex; align-items: center; justify-content: center; }
.sep3 { margin-left: 3px; }
.nudge { margin-left: 2px; }
.nudge1 { margin-left: 1px; }
.a3 { margin: 0 3px; }

/* canvas */
.canvas { position: relative; height: 225px; margin-top: 3px; flex: none; overflow: hidden; }
.scene { display: block; width: 1076px; height: 225px; }
.cad text { font: 13px "DejaVu Sans Mono", monospace; fill: #2c5f2c; font-size: 11.600px; }
.cad .cad-zh { font: 12px "Noto Sans CJK SC", sans-serif; }
.ctrl {
  position: absolute; left: 4px; top: 2px; width: 179px; height: 181px;
  border: 1px solid #777; border-radius: 7px; padding: 6px 4px 5px;
  background:
    radial-gradient(ellipse 60px 30px at 65% 10px, #8e8e8e 0, rgba(120,120,120,0) 100%),
    linear-gradient(#5a5a5a 0, #3a3a3a 14px, #141414 40%, #141414 85%, #303030 100%);
  display: flex; flex-direction: column;
}
.ctrl-title { color: #262626; height: 19px; padding-left: 2px; line-height: 14px; font-size: 12px; }
.ctrl-box { flex: 1; background: #fff; border: 3px double #999; outline: 1px solid #bbb; padding: 1px 0 0 3px; }
.ck { display: flex; align-items: center; height: 12px; line-height: 12px; gap: 4px; white-space: nowrap; }
.chk { width: 11px; height: 11px; border: 1px solid #a4a4a4; background: #e8ecf4; color: #3a4ea0; font: 700 10px/9px "DejaVu Sans", sans-serif; text-align: center; flex: none; }

/* row 5 */
.r5 { height: 24px; margin-top: 3px; margin-left: 4px; }
.r5a { width: 206px; flex: none; }
.r5a .grip { margin: 0; }
.r5b { width: 262px; margin-left: 2px; flex: none; }
.r5b .grip { margin: 0 1px 0 2px; }
.r5c { width: 410px; margin-left: 3px; flex: none; color: #444; }
.r5c .grip { margin: 0 0 0 3px; }
.r5c .s1 { margin: 0 1px; }
.r5c .s2 { margin: 0 3px; }
.lbl { font-family: "Liberation Sans", sans-serif; color: #777; font-size: 12px; flex: none; }
.mm { margin: 0 7px 0 6px; }
.yy { margin-right: -2px; }
.num { width: 53px; height: 22px; margin-left: 5px; border: 1px solid #8c8c8c; background: #f4f4f4; display: flex; align-items: center; flex: none; font-family: "Liberation Sans", sans-serif; color: #777; }
.n68 { width: 68px; margin-left: 4px; }
.val { flex: 1; text-align: right; padding-right: 3px; }
.spin { width: 13px; display: flex; flex-direction: column; align-items: center; gap: 7px; }
.su, .sd { width: 0; height: 0; border-left: 3px solid transparent; border-right: 3px solid transparent; }
.su { border-bottom: 4px solid #666; }
.sd { border-top: 4px solid #666; }
.box { width: 12px; height: 12px; border: 1px solid #999; background: #fff; flex: none; }
.rot { margin-left: 8px; color: #000; flex: none; }
.deg { margin-left: 3px; }

/* lower */
.lower { display: flex; margin-top: 8px; flex: 1; min-height: 0; }
.dock {
  width: 11px; flex: none; position: relative;
  background-image: radial-gradient(circle, #bbb 1px, transparent 1.2px);
  background-size: 4.500px 4.500px; background-position: 1px 8px;
}
.dock-x { display: block; width: 10px; height: 9px; background: #e8e8e8; border: 1px solid #777; color: #a03030; font: 700 9px/7px "Liberation Sans", sans-serif; text-align: center; }
.lower-main { flex: 1; min-width: 0; }
.r6 { height: 20px; background: #f6f6f6; flex: none; }
.r6 .it { height: 20px; }
.nav { width: 24px; display: flex; justify-content: center; flex: none; }
.nv { width: 12px; }
.sep2 { margin: 0; margin-left: 2px; }
.close { margin-left: 2px; }
.total { margin-left: 5px; color: #000; }

.grid { table-layout: fixed; width: 1063px; margin: 5px 0 0 2px; border-collapse: separate; border-spacing: 0; border-top: 2px solid #bcbcbc; border-left: 1px solid #bcbcbc; }
.w34 { width: 33px; } .w73 { width: 73px; } .w57 { width: 57px; } .w35 { width: 35px; } .w33 { width: 33px; }
.w201 { width: 201px; } .w166 { width: 166px; } .w156 { width: 156px; } .w61 { width: 61px; } .w38 { width: 38px; }
.w39 { width: 39px; } .w49 { width: 49px; } .w60 { width: 60px; }
.grid thead tr { height: 19px; }
.grid th {
  padding: 0; font-weight: 400; font-size: 12px; line-height: 14px; color: #5b0a7a; white-space: nowrap; overflow: hidden;
  background: linear-gradient(#fbdc9f, #f0b65c); border-right: 1px solid #bcbcbc;
}
.grid th.corner { background: #f2f2f2; }
.grid td {
  padding: 0 0 0 3px; background: #ccffd4; border-right: 1px solid #bcbcbc; border-bottom: 1px solid #bcbcbc;
  line-height: 12px; white-space: nowrap; overflow: hidden; vertical-align: middle;
}
.h29 { height: 29px; } .h30 { height: 30px; } .h33 { height: 33px; } .h34 { height: 34px; } .h41 { height: 41px; }
.grid .cur-row td { background: #a1e1e6; }
.grid td.rh {
  background: linear-gradient(90deg, #fff, #ececec); text-align: center; padding: 0;
  font: 10px/12px "DejaVu Sans Mono", monospace;
}
.grid .cur-row td.rs { background: #ffd68a; }
.grid td.nm { padding-left: 2px; border-right: 1px solid #000; }
.grid td.n { font: 10px/12px "DejaVu Sans Mono", monospace; }
.grid td.f { padding-left: 2px; }
.grid td.d { padding-left: 3px; }
.grid td.gr { text-align: center; padding: 0; }
.grid td.sh { padding: 0; vertical-align: top; }
.shape { display: block; width: 200px; height: 28px; overflow: visible; margin-left: -1px; }
.shape path { fill: none; stroke: #000; stroke-width: 2; }
.shape text { font: 10px "DejaVu Sans Mono", monospace; fill: #000; }
.shape .rd { fill: #f00; text-anchor: middle; }
.shape .mid { text-anchor: middle; }
```
